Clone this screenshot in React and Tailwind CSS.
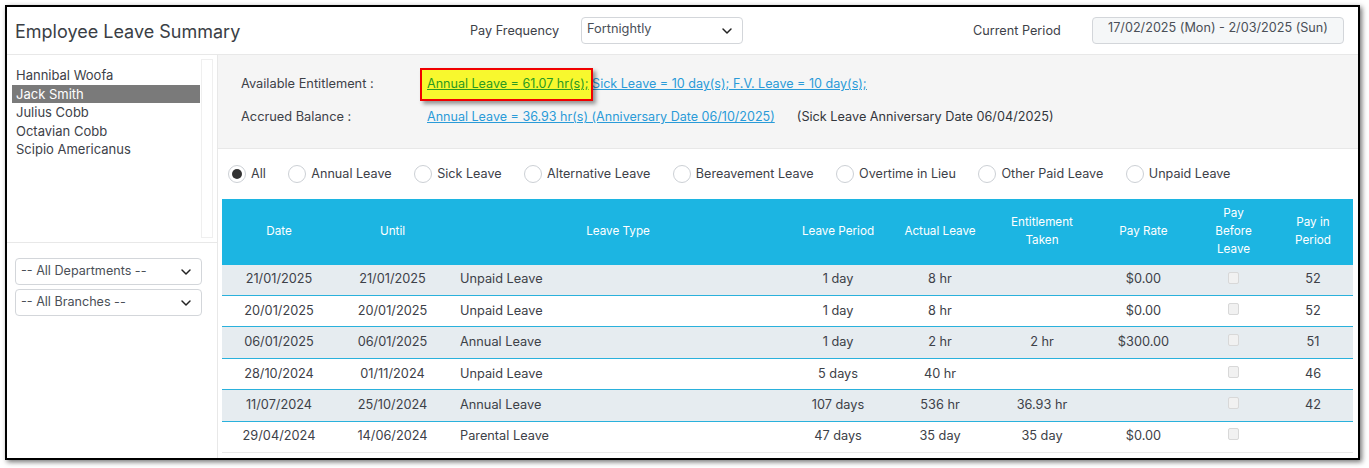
import { ChevronDown } from 'lucide-react'

const leaveTypes = ['All', 'Annual Leave', 'Sick Leave', 'Alternative Leave', 'Bereavement Leave', 'Overtime in Lieu', 'Other Paid Leave', 'Unpaid Leave']
const employees = ['Hannibal Woofa', 'Jack Smith', 'Julius Cobb', 'Octavian Cobb', 'Scipio Americanus']

const rows = [
  ['21/01/2025', '21/01/2025', 'Unpaid Leave', '1 day', '8 hr', '', '$0.00', '52'],
  ['20/01/2025', '20/01/2025', 'Unpaid Leave', '1 day', '8 hr', '', '$0.00', '52'],
  ['06/01/2025', '06/01/2025', 'Annual Leave', '1 day', '2 hr', '2 hr', '$300.00', '51'],
  ['28/10/2024', '01/11/2024', 'Unpaid Leave', '5 days', '40 hr', '', '', '46'],
  ['11/07/2024', '25/10/2024', 'Annual Leave', '107 days', '536 hr', '36.93 hr', '', '42'],
  ['29/04/2024', '14/06/2024', 'Parental Leave', '47 days', '35 day', '35 day', '$0.00', ''],
]

function Dropdown({ label, className, labelClass }) {
  return (
    <div className={`flex h-[27px] items-center justify-between rounded border border-[#d3d6da] bg-white pl-[5px] pr-[7px] text-[#4a4f57] ${className}`}>
      <span className={labelClass}>{label}</span>
      <ChevronDown size={16} strokeWidth={2.2} className="text-[#222]" />
    </div>
  )
}

export default function App() {
  return (
    <div className="h-[468px] w-[1369px] overflow-hidden bg-white pl-[5px] pt-[5px] font-['Inter',sans-serif] text-[13px] text-[#3d4148]">
      <div className="h-[455px] w-[1355px] overflow-hidden border-2 border-black bg-white shadow-[2px_2px_5px_rgba(0,0,0,0.55)]">
        {/* Top bar */}
        <div className="flex h-[48px] items-center border-b border-[#e8e8e8]">
          <h1 className="ml-[8px] mt-[2px] w-[455px] text-[18px] leading-none text-[#3a3e45]">Employee Leave Summary</h1>
          <span className="w-[111px] text-[12.7px]">Pay Frequency</span>
          <Dropdown label="Fortnightly" className="w-[162px] text-[12.8px]" labelClass="-mt-[3px]" />
          <span className="ml-[230px] w-[119px] text-[12.7px]">Current Period</span>
          <div className="flex h-[27px] w-[252px] items-center justify-center rounded border border-[#d3d6da] bg-[#f5f7f8] pb-[4px] text-[12.65px] text-[#4a4f57]">
            17/02/2025 (Mon) - 2/03/2025 (Sun)
          </div>
        </div>

        <div className="flex h-[405px]">
          {/* Employee list and filters */}
          <aside className="w-[211px] shrink-0 border-r border-[#e8e8e8]">
            <div className="flex h-[188px] border-b border-[#e8e8e8] pl-[5px] pt-[4px]">
              <ul className="w-[188px] pt-[7px] leading-[18.6px]">
                {employees.map((name) => (
                  <li key={name} className={name === 'Jack Smith' ? 'bg-[#7a7a7a] pl-[4px] text-white' : 'pl-[4px]'}>
                    {name}
                  </li>
                ))}
              </ul>
              <div className="ml-[1px] h-[179px] w-[12px] border border-[#efefef]" />
            </div>
            <div className="flex flex-col gap-[4px] pl-[8px] pt-[15px] text-[12.6px]">
              <Dropdown label="-- All Departments --" className="w-[187px]" labelClass="-mt-[1px]" />
              <Dropdown label="-- All Branches --" className="w-[187px]" labelClass="-mt-[1px]" />
            </div>
          </aside>

          <main className="min-w-0 flex-1">
            {/* Entitlement panel */}
            <div className="flex h-[94px] flex-col gap-[15px] border-b border-[#e8e8e8] bg-[#f5f5f5] pl-[23px] pt-[20px] text-[12.55px] leading-[18px]">
              <div className="flex">
                <span className="w-[186px] text-[12.8px]">Available Entitlement :</span>
                <div className="relative underline">
                  <a className="text-[#2a9bd8]"><span className="invisible">Annual Leave = 61.07 hr(s);</span> Sick Leave = 10 day(s); F.V. Leave = 10 day(s);</a>
                  <span className="absolute -left-[7px] -top-[7px] h-[33px] w-[173px] border-2 border-[#f00000] bg-[#f8f82e] shadow-[3px_3px_4px_rgba(0,0,0,0.4)]" />
                  <a className="absolute left-0 top-0 whitespace-nowrap text-[#2b9a22]">Annual Leave = 61.07 hr(s);</a>
                </div>
              </div>
              <div className="flex">
                <span className="w-[186px] text-[12.8px]">Accrued Balance :</span>
                <a className="text-[#2a9bd8] underline">Annual Leave = 36.93 hr(s) (Anniversary Date 06/10/2025)</a>
                <span className="ml-[22px] text-[12.7px] text-[#33363c]">(Sick Leave Anniversary Date 06/04/2025)</span>
              </div>
            </div>

            {/* Leave type filter */}
            <div className="flex h-[50px] items-center gap-[22.5px] pl-[10px] text-[12.6px]">
              {leaveTypes.map((type) => (
                <label key={type} className="flex items-center gap-[5px]">
                  <span className="flex h-[18px] w-[18px] items-center justify-center rounded-full border border-[#ccd0d5] bg-white">
                    {type === 'All' && <span className="h-[10px] w-[10px] rounded-full bg-[#333]" />}
                  </span>
                  {type}
                </label>
              ))}
            </div>

            <div className="pl-[4px]">
              <table className="w-[1131px] table-fixed border-separate border-spacing-0 text-center text-[12.75px]">
                <colgroup>
                  <col className="w-[114px]" />
                  <col className="w-[113px]" />
                  <col className="w-[338px]" />
                  <col className="w-[102px]" />
                  <col className="w-[102px]" />
                  <col className="w-[102px]" />
                  <col className="w-[101px]" />
                  <col className="w-[79px]" />
                  <col className="w-[80px]" />
                </colgroup>
                <thead>
                  <tr className="h-[66px] bg-[#1cb5e2] text-[11.7px] leading-[18px] text-white">
                    <th className="pb-[2px] font-normal">Date</th>
                    <th className="pb-[2px] font-normal">Until</th>
                    <th className="pb-[2px] font-normal">Leave Type</th>
                    <th className="pb-[2px] font-normal">Leave Period</th>
                    <th className="pb-[2px] font-normal">Actual Leave</th>
                    <th className="pb-[2px] font-normal">Entitlement<br />Taken</th>
                    <th className="pb-[2px] font-normal">Pay Rate</th>
                    <th className="pb-[2px] font-normal">Pay<br />Before<br />Leave</th>
                    <th className="pb-[2px] font-normal">Pay in<br />Period</th>
                  </tr>
                </thead>
                <tbody>
                  {rows.map((row, i) => (
                    <tr
                      key={row[0]}
                      className={`${i === 2 || i === 4 ? 'h-[32px]' : 'h-[31px]'} ${i % 2 === 0 ? 'bg-[#e6ecf0]' : 'bg-white'} ${i === rows.length - 1 ? '[&>td]:border-[#e8e8e8]' : '[&>td]:border-[#2ab1dc]'} ${i === 1 || i === 3 ? '' : '[&>td]:pb-[2px]'} [&>td]:border-b`}
                    >
                      <td>{row[0]}</td>
                      <td>{row[1]}</td>
                      <td className="pl-[11px] text-left">{row[2]}</td>
                      <td>{row[3]}</td>
                      <td>{row[4]}</td>
                      <td>{row[5]}</td>
                      <td>{row[6]}</td>
                      <td>
                        <span className={`mx-auto block h-[12px] w-[11px] rounded-[2px] border border-[#d8d8d8] bg-[#f1f1f1] ${i === 0 ? 'mb-[2px]' : 'mb-[4px]'}`} />
                      </td>
                      <td>{row[7]}</td>
                    </tr>
                  ))}
                </tbody>
              </table>
            </div>
          </main>
        </div>
      </div>
    </div>
  )
}
